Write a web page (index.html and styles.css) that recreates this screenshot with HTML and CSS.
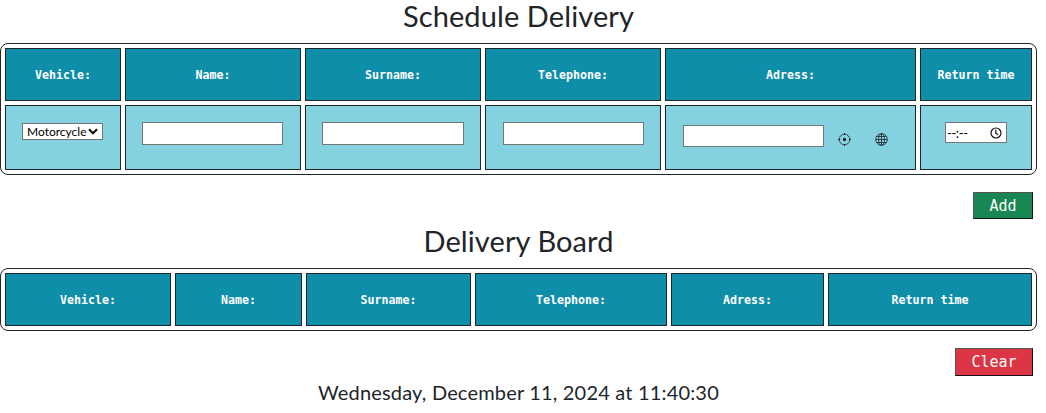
FILE: index.html
```html
<!DOCTYPE html>
<html lang="en">
<head>
<meta charset="utf-8">
<title>Schedule Delivery</title>
<link rel="stylesheet" href="styles.css">
</head>
<body>
<main class="page">
  <h1 class="title">Schedule Delivery</h1>
  <section class="board schedule">
    <div class="head">Vehicle:</div>
    <div class="head">Name:</div>
    <div class="head">Surname:</div>
    <div class="head">Telephone:</div>
    <div class="head">Adress:</div>
    <div class="head">Return time</div>
    <div class="cell">
      <div class="select"><span>Motorcycle</span>
        <svg class="chevron" viewBox="0 0 10 7"><path d="M1 1.2 5 5.2 9 1.2" fill="none" stroke="#111" stroke-width="2.2"/></svg>
      </div>
    </div>
    <div class="cell"><input class="field" type="text"></div>
    <div class="cell"><input class="field surname" type="text"></div>
    <div class="cell phone"><input class="field" type="text"></div>
    <div class="cell address">
      <input class="field short" type="text">
      <svg class="icon target" viewBox="0 0 14 14" fill="none" stroke="#212529"><circle cx="7.5" cy="7.5" r="5.3" stroke-width=".8"/><path d="M7.5 1v2M7.5 12v2M1 7.5h2M12 7.5h2"/><circle cx="7.5" cy="7.5" r="1.7" fill="#212529" stroke="none"/></svg>
      <svg class="icon globe" viewBox="0 0 14 14" fill="none" stroke="#212529" stroke-width=".8"><circle cx="7.5" cy="7.5" r="5.8"/><ellipse cx="7.5" cy="7.5" rx="3" ry="5.8"/><path d="M7.5 1.7v11.6M1.7 7.5h11.6M2.6 4.5h9.8M2.6 10.5h9.8"/></svg>
    </div>
    <div class="cell time-cell">
      <div class="time"><span class="time-text">--:--</span>
        <svg class="clock" viewBox="0 0 12 12" fill="none" stroke="#111" stroke-width="1.2"><circle cx="6" cy="6" r="5"/><path d="M5.8 2.8v3.4l2.2 1.6"/></svg>
      </div>
    </div>
  </section>
  <button class="button add" type="button">Add</button>
  <h2 class="title second">Delivery Board</h2>
  <section class="board delivery">
    <div class="head">Vehicle:</div>
    <div class="head">Name:</div>
    <div class="head">Surname:</div>
    <div class="head">Telephone:</div>
    <div class="head">Adress:</div>
    <div class="head">Return time</div>
  </section>
  <button class="button clear" type="button">Clear</button>
  <p class="date">Wednesday, December 11, 2024 at 11:40:30</p>
</main>
</body>
</html>
```
FILE: styles.css
```css
* { box-sizing: border-box; }
body {
  margin: 0;
  background: #fff;
  color: #212529;
  font-family: Lato, "Open Sans", sans-serif;
  overflow: hidden;
}
.page { display: flex; flex-direction: column; width: 1037px; }
.title {
  height: 43px;
  margin: 0;
  text-align: center;
  font-size: 29px;
  font-weight: 400;
  line-height: 32px;
  letter-spacing: .1px;
}
.board {
  display: grid;
  gap: 4px;
  padding: 4px;
  border: 1px solid #212529;
  border-radius: 8px;
}
.schedule { grid-template: 53px 65px / 116px 176px 176px 176px 251px 112px; }
.delivery { grid-template: 53px / 166px 127px 165px 192px 153px 204px; }
.head {
  display: flex;
  align-items: center;
  justify-content: center;
  padding-top: 1px;
  border: 1px solid #212529;
  background: #0f8eaa;
  color: #fff;
  font: bold 11.6px "DejaVu Sans Mono", monospace;
  white-space: pre;
}
.cell {
  display: flex;
  align-items: flex-start;
  padding: 16px;
  border: 1px solid #212529;
  background: #84d1e0;
}
.phone { padding-left: 17px; }
.address { padding: 19px 0 0 17px; }
.time-cell { padding-left: 24px; }
.field {
  width: 141px;
  height: 23px;
  margin: 0;
  border: 1px solid #767676;
  border-radius: 0;
  background: #fff;
}
.surname { width: 142px; }
.short { height: 22px; }
.select {
  display: flex;
  align-items: center;
  justify-content: space-between;
  width: 81px;
  height: 17px;
  margin-top: 1px;
  padding: 0 4px;
  border: 1px solid #767676;
  background: #fff;
  color: #000;
  font-size: 12px;
}
.chevron { width: 10px; height: 7px; }
.icon { flex: none; width: 14px; height: 14px; margin-top: 7px; }
.target { margin-left: 13px; }
.globe { margin-left: 23px; }
.time {
  display: flex;
  align-items: center;
  justify-content: space-between;
  width: 62px;
  height: 21px;
  padding: 0 4px 0 1px;
  border: 1px solid #767676;
  background: #fff;
  color: #000;
  font-size: 13px;
}
.time-text { letter-spacing: -.4px; }
.clock { width: 12px; height: 12px; }
.button {
  align-self: flex-end;
  margin: 17px 4px 0 0;
  padding: 0;
  border-width: 1px;
  border-style: solid;
  border-color: #555 #111 #111 #555;
  border-radius: 0;
  color: #fff;
  font: 15px "DejaVu Sans Mono", monospace;
}
.add { width: 60px; height: 27px; background: #198754; }
.clear { width: 78px; height: 28px; background: #dc3545; }
.second { height: 49px; padding-top: 6px; }
.date {
  height: 37px;
  margin: 0;
  text-align: center;
  font-size: 20px;
  line-height: 33px;
  letter-spacing: .18px;
}
```
